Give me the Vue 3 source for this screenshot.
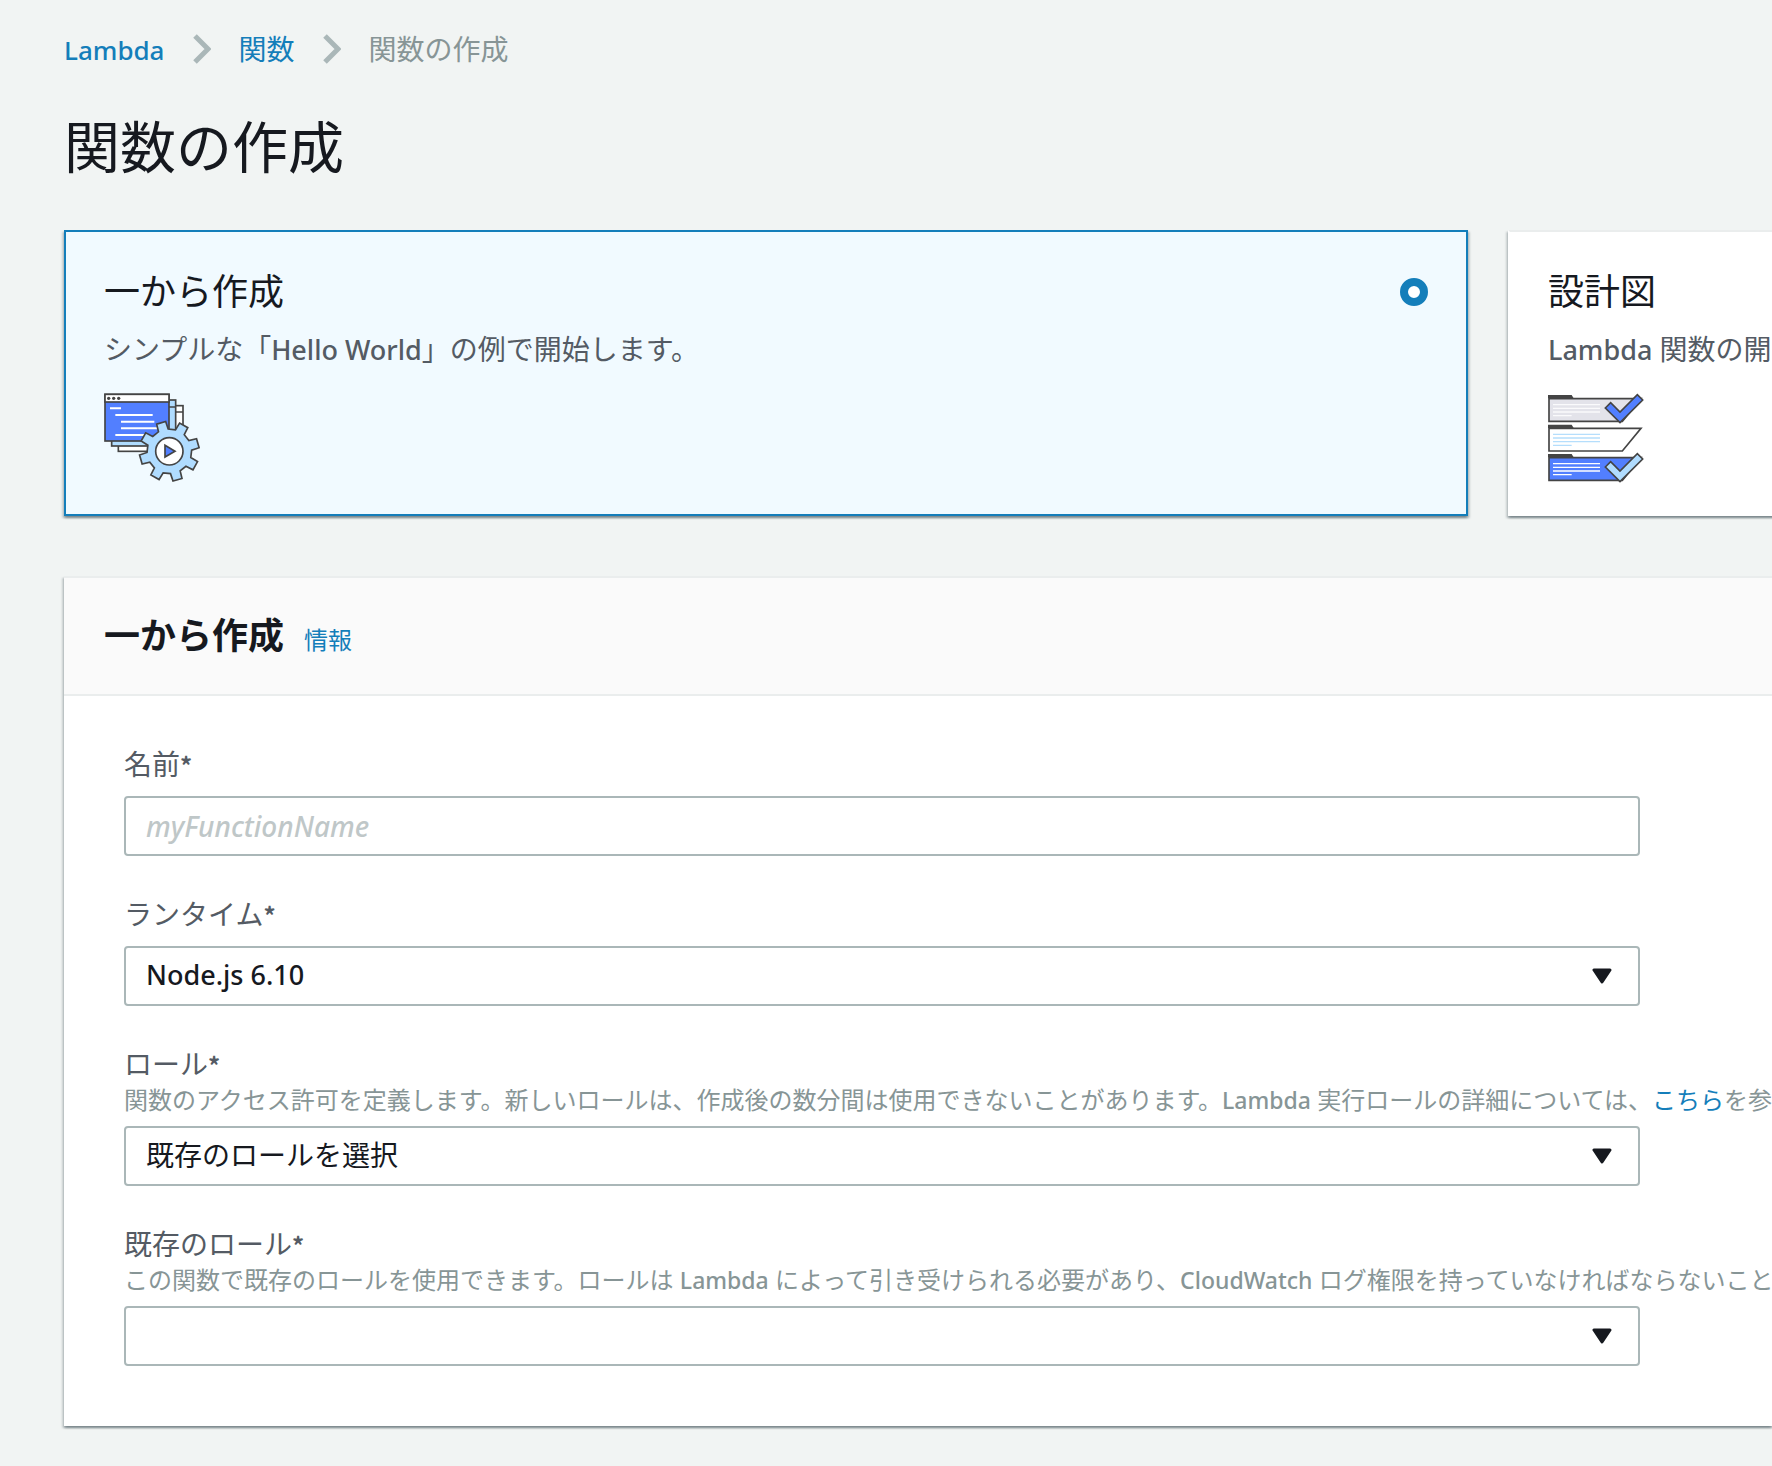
<script setup>
import { ref } from 'vue'

const method = ref('scratch')
const functionName = ref('')
const runtime = ref('nodejs6.10')
const role = ref('existing')
const existingRole = ref('')

function gearPoints(cx, cy, outer, root, teeth, phase) {
  const points = []
  const add = (radius, angle) => {
    const rad = (angle * Math.PI) / 180
    points.push(`${(cx + radius * Math.cos(rad)).toFixed(1)},${(cy + radius * Math.sin(rad)).toFixed(1)}`)
  }
  for (let i = 0; i < teeth; i++) {
    const angle = phase + (360 / teeth) * i
    add(root, angle - 13)
    add(outer, angle - 9)
    add(outer, angle + 9)
    add(root, angle + 13)
  }
  return points.join(' ')
}

const gear = gearPoints(223, 199, 90, 67, 8, -106)

const folders = [
  { y: 0, fill: '#e3e3ea', line: '#fafafc', check: '#527fff' },
  { y: 89, fill: '#ffffff', line: '#b5defc', check: null },
  { y: 177, fill: '#527fff', line: '#ffffff', check: '#b0dcff' },
]
</script>

<template>
  <div class="page">
    <nav class="breadcrumb" aria-label="breadcrumb">
      <a href="#"><span class="latin">Lambda</span></a>
      <svg class="separator" viewBox="0 0 18 30" aria-hidden="true"><path d="M2 2 L15 15 L2 28" /></svg>
      <a href="#">関数</a>
      <svg class="separator" viewBox="0 0 18 30" aria-hidden="true"><path d="M2 2 L15 15 L2 28" /></svg>
      <span class="current">関数の作成</span>
    </nav>

    <h1>関数の作成</h1>

    <div class="cards">
      <label class="card" :class="{ selected: method === 'scratch' }">
        <span class="card-head">
          <span class="card-title">一から作成</span>
          <input v-model="method" class="radio" type="radio" name="method" value="scratch" />
        </span>
        <span class="card-text">シンプルな「<span class="latin">Hello World</span>」の例で開始します。</span>
        <svg class="card-icon" viewBox="27 21 288 276" aria-hidden="true">
          <g stroke="#444" stroke-width="5">
            <rect x="70" y="62" width="194" height="137" fill="#fff" />
            <path d="M70 81H264" />
            <rect x="50" y="45" width="192" height="138" fill="#b0dcff" />
            <path d="M50 66H242" />
            <rect x="30" y="28" width="192" height="140" fill="#527fff" />
            <rect x="30" y="28" width="192" height="23" fill="#fff" />
          </g>
          <g fill="#444">
            <circle cx="41" cy="40" r="5" />
            <circle cx="56" cy="40" r="5" />
            <circle cx="71" cy="40" r="5" />
          </g>
          <path d="M45 70H78M61 90H173M78 110H178M78 130H190M61 150H150" stroke="#fff" stroke-width="6" />
          <polygon :points="gear" fill="#b0dcff" stroke="#444" stroke-width="5" />
          <circle cx="223" cy="199" r="41" fill="#fff" stroke="#444" stroke-width="5" />
          <path d="M210 181L240 199L210 216Z" fill="#527fff" stroke="#444" stroke-width="5" />
        </svg>
      </label>

      <label class="card" :class="{ selected: method === 'blueprint' }">
        <span class="card-head">
          <span class="card-title">設計図</span>
          <input v-model="method" class="radio" type="radio" name="method" value="blueprint" />
        </span>
        <span class="card-text"><span class="latin">Lambda</span> 関数の開始</span>
        <svg class="card-icon" viewBox="24 21 288 276" aria-hidden="true">
          <g v-for="folder in folders" :key="folder.y" :transform="`translate(0 ${folder.y})`">
            <path d="M24 30H95L101 40H24Z" fill="#444" />
            <path d="M27 41H303L247 109H27Z" :fill="folder.fill" stroke="#444" stroke-width="5" />
            <path d="M39 59H180M39 70H180M39 81H180M39 92H95" :stroke="folder.line" stroke-width="4" />
            <path
              v-if="folder.check"
              d="M196 69L212 53L240 81L292 29L308 45L240 113Z"
              :fill="folder.check"
              stroke="#444"
              stroke-width="5"
            />
          </g>
        </svg>
      </label>
    </div>

    <section class="panel">
      <header class="panel-head">
        <h2>一から作成</h2>
        <a href="#">情報</a>
      </header>

      <form class="panel-body" @submit.prevent>
        <div class="field">
          <label for="name">名前<span class="required">*</span></label>
          <input id="name" v-model="functionName" class="control" type="text" placeholder="myFunctionName" />
        </div>

        <div class="field">
          <label for="runtime">ランタイム<span class="required">*</span></label>
          <div class="select">
            <select id="runtime" v-model="runtime" class="control latin">
              <option value="nodejs6.10">Node.js 6.10</option>
            </select>
            <svg class="caret" viewBox="0 0 20 16" aria-hidden="true"><path d="M2 2H18L10 14Z" /></svg>
          </div>
        </div>

        <div class="field has-help">
          <label for="role">ロール<span class="required">*</span></label>
          <p class="help">関数のアクセス許可を定義します。新しいロールは、作成後の数分間は使用できないことがあります。<span class="latin">Lambda</span> 実行ロールの詳細については、<a href="#">こちら</a>を参照</p>
          <div class="select">
            <select id="role" v-model="role" class="control">
              <option value="existing">既存のロールを選択</option>
            </select>
            <svg class="caret" viewBox="0 0 20 16" aria-hidden="true"><path d="M2 2H18L10 14Z" /></svg>
          </div>
        </div>

        <div class="field has-help">
          <label for="existing-role">既存のロール<span class="required">*</span></label>
          <p class="help">この関数で既存のロールを使用できます。ロールは <span class="latin">Lambda</span> によって引き受けられる必要があり、<span class="latin">CloudWatch</span> ログ権限を持っていなければならないこと</p>
          <div class="select">
            <select id="existing-role" v-model="existingRole" class="control">
              <option value=""></option>
            </select>
            <svg class="caret" viewBox="0 0 20 16" aria-hidden="true"><path d="M2 2H18L10 14Z" /></svg>
          </div>
        </div>
      </form>
    </section>
  </div>
</template>

<style>
body {
  margin: 0;
  background: #f1f4f3;
}
</style>

<style scoped>
.page {
  box-sizing: border-box;
  min-height: 100vh;
  padding: 31px 0 39px 64px;
  overflow: hidden;
  background: #f1f4f3;
  color: #16191f;
  font-family: "Noto Sans", "Noto Sans CJK JP", sans-serif;
  font-size: 28px;
  line-height: 36px;
  white-space: nowrap;
}

a {
  color: #147eba;
  text-decoration: none;
}

.latin {
  font-size: 27px;
  font-weight: 500;
  line-height: 1;
}

.required {
  font-family: "Noto Sans CJK JP", sans-serif;
  font-size: 24px;
  font-weight: 700;
  line-height: 1;
}

.breadcrumb {
  display: flex;
  align-items: center;
  gap: 28px;
}

.breadcrumb .latin {
  font-size: 26px;
}

.separator {
  width: 18px;
  height: 30px;
  fill: none;
  stroke: #aab7b8;
  stroke-width: 5;
}

.current {
  color: #879596;
}

h1 {
  margin: 43px 0 48px;
  font-size: 56px;
  font-weight: 400;
  line-height: 72px;
}

.cards {
  display: grid;
  grid-auto-flow: column;
  grid-auto-columns: 82.2%;
  gap: 40px;
}

.card,
.panel {
  background: #fff;
  box-shadow:
    0 2px 2px rgba(0, 28, 36, 0.3),
    2px 2px 2px rgba(0, 28, 36, 0.15),
    -2px 2px 2px rgba(0, 28, 36, 0.15);
}

.card {
  display: flex;
  flex-direction: column;
  box-sizing: border-box;
  padding: 38px 38px 30px;
  border: 2px solid;
  border-color: #eaeded #fff #fff;
}

.card.selected {
  border-color: #147eba;
  background: #f1faff;
}

.card-head {
  display: flex;
  align-items: center;
  justify-content: space-between;
}

.card-title {
  font-size: 36px;
  line-height: 44px;
}

.radio {
  width: 28px;
  height: 28px;
  margin: 0;
  border: 2px solid #aab7b8;
  border-radius: 50%;
  appearance: none;
  background: #fff;
}

.radio:checked {
  border: 8px solid #147eba;
}

.card-text {
  margin: 17px 0 25px;
  color: #545b64;
}

.card-icon {
  width: 96px;
  height: 92px;
}

.panel {
  margin-top: 60px;
  border-top: 2px solid #eaeded;
}

.panel-head {
  display: flex;
  align-items: baseline;
  gap: 20px;
  padding: 36px 40px;
  border-bottom: 2px solid #eaeded;
  background: #fafafa;
}

h2 {
  margin: 0;
  font-size: 36px;
  font-weight: 700;
  line-height: 44px;
}

.panel-head a {
  font-size: 24px;
  line-height: 28px;
}

.panel-body {
  display: flex;
  flex-direction: column;
  gap: 40px;
  padding: 50px 0 60px 60px;
}

.field {
  display: flex;
  flex-direction: column;
  gap: 14px;
}

.field.has-help {
  gap: 0;
}

.field label {
  color: #545b64;
}

.help {
  margin: 0 0 8px;
  color: #879596;
  font-size: 24px;
}

.help .latin {
  font-size: 23px;
}

.control {
  box-sizing: border-box;
  width: 92%;
  height: 60px;
  padding: 0 20px;
  border: 2px solid #aab7b8;
  border-radius: 4px;
  appearance: none;
  background: #fff;
  color: #16191f;
  font-family: inherit;
  font-size: 28px;
}

.control.latin {
  font-size: 27px;
  line-height: 40px;
}

.control::placeholder {
  color: #bfc7c8;
  font-style: italic;
  font-weight: 500;
  opacity: 1;
}

.select {
  position: relative;
  width: 92%;
}

.select .control {
  display: block;
  width: 100%;
  padding-bottom: 2px;
}

.caret {
  position: absolute;
  top: 22px;
  right: 28px;
  width: 20px;
  height: 16px;
  fill: #16191f;
  stroke: #16191f;
  stroke-width: 3;
  stroke-linejoin: round;
  pointer-events: none;
}
</style>
